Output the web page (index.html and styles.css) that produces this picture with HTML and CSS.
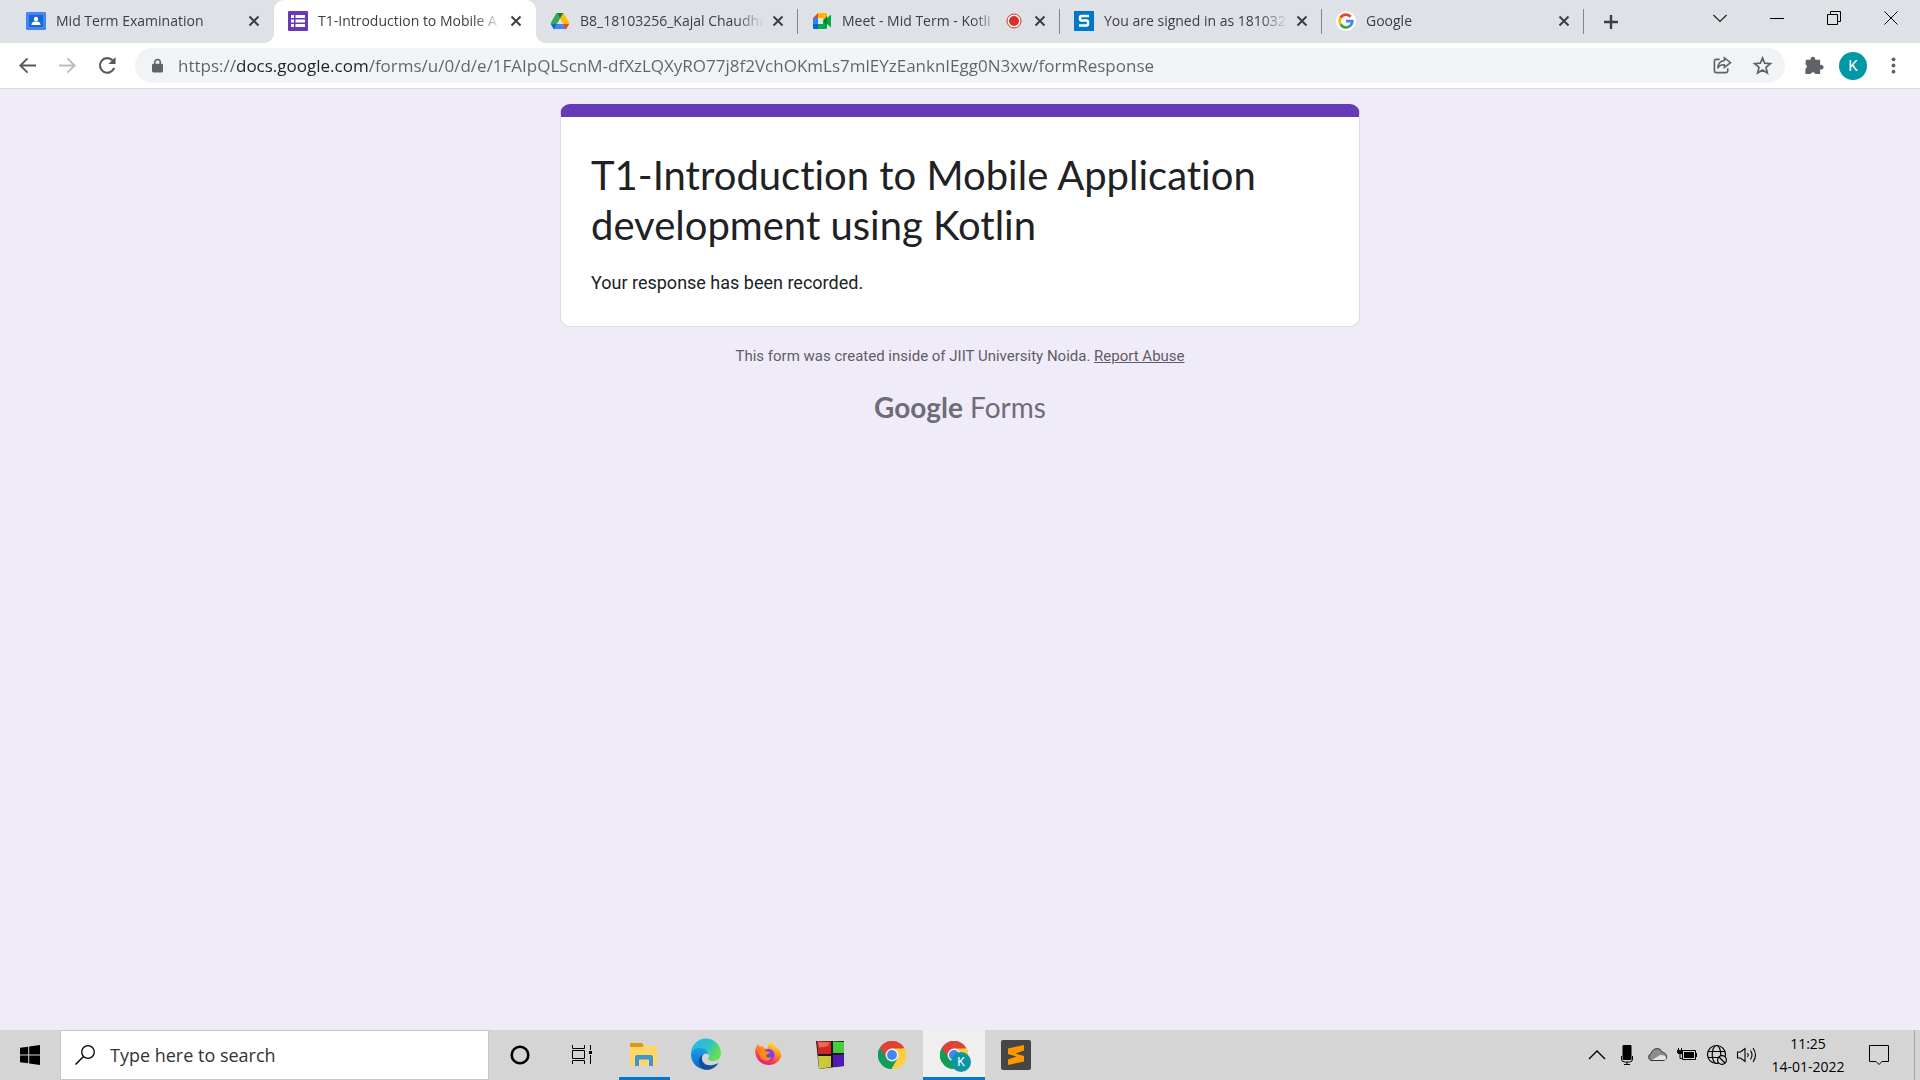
FILE: index.html
```html
<!DOCTYPE html>
<html lang="en">
<head>
<meta charset="utf-8">
<title>T1-Introduction to Mobile Application development using Kotlin</title>
<link rel="stylesheet" href="styles.css">
</head>
<body>
<svg class="defs" aria-hidden="true">
  <symbol id="x" viewBox="0 0 12 12"><path d="M1.500 1.500l9 9M10.500 1.500l-9 9" fill="none" stroke="#3c4043" stroke-width="2"/></symbol>
  <symbol id="chrome" viewBox="0 0 48 48">
    <path d="M24 24L3.200 12A24 24 0 0 1 44.800 12z" fill="#db4437"/>
    <path d="M24 24L44.800 12A24 24 0 0 1 24 48z" fill="#ffcd40"/>
    <path d="M24 24L24 48A24 24 0 0 1 3.200 12z" fill="#0f9d58"/>
    <path d="M24 13h22.300A24 24 0 0 0 44.800 12 24 24 0 0 0 3.200 12l11.300 17.500z" fill="#db4437"/>
    <path d="M33.500 29.500L23 48A24 24 0 0 0 46.300 13H24z" fill="#ffcd40"/>
    <path d="M14.500 29.500L3.200 12A24 24 0 0 0 23 48l10.500-18.500z" fill="#0f9d58"/>
    <circle cx="24" cy="24" r="11" fill="#f4f4f4"/><circle cx="24" cy="24" r="8.500" fill="#4285f4"/>
  </symbol>
</svg>

<header class="browser">
  <div class="tabstrip">
    <div class="tabs">
      <div class="tab">
        <svg class="fav" viewBox="0 0 20 20"><rect y="1" width="20" height="18" rx="1" fill="#4285f4"/><rect x="3" y="4" width="14" height="12" fill="#1967d2"/><circle cx="10" cy="8" r="2.200" fill="#fff"/><path d="M5.500 14c0-3 2-3.500 4.500-3.500s4.500.5 4.500 3.500z" fill="#fff"/></svg>
        <span class="tab-title">Mid Term Examination</span>
        <button class="close" aria-label="Close tab"><svg><use href="#x"/></svg></button>
      </div>
      <div class="tab active">
        <svg class="fav" viewBox="0 0 20 20"><rect width="20" height="20" rx="1" fill="#673ab7"/><path d="M3 4h3v3H3zM7.500 4H17v3H7.500zM3 8.500h3v3H3zM7.500 8.500H17v3H7.500zM3 13h3v3H3zM7.500 13H17v3H7.500z" fill="#fff"/></svg>
        <span class="tab-title">T1-Introduction to Mobile A</span>
        <button class="close" aria-label="Close tab"><svg><use href="#x"/></svg></button>
      </div>
      <div class="tab">
        <svg class="fav" viewBox="0 0 20 20"><path d="M6.500 2h7L10 8z" fill="#188038"/><path d="M6.500 2L10 8 4 18.500 1 13.500Q.7 12.500 1 11.500z" fill="#34a853"/><path d="M13.500 2L19 11.500 19.200 13H13L10 8z" fill="#fbbc04"/><path d="M7 13h6l3.500 5H4z" fill="#4285f4"/><path d="M.9 13H7l-3 5.500z" fill="#1967d2"/><path d="M13 13h6.200L16 18.500z" fill="#ea4335"/><path d="M10 8l3 5H7z" fill="#dee1e6"/></svg>
        <span class="tab-title">B8_18103256_Kajal Chaudha</span>
        <button class="close" aria-label="Close tab"><svg><use href="#x"/></svg></button>
      </div>
      <div class="tab">
        <svg class="fav" viewBox="0 0 20 20"><path d="M1 7l5-5v5z" fill="#ea4335"/><path d="M6 2h8q1 0 1 1v4l-4 3V7H6z" fill="#ffba00"/><path d="M1 7h5v6H1z" fill="#2684fc"/><path d="M1 13h5v5H2q-1 0-1-1z" fill="#0066da"/><path d="M6 13h5v-3l4 3v4q0 1-1 1H6z" fill="#00ac47"/><path d="M11 10l4-5v10z" fill="#00832d"/><path d="M15 7l4-3.500v13L15 13z" fill="#00ac47"/></svg>
        <span class="tab-title">Meet - Mid Term - Kotli</span>
        <svg class="rec" viewBox="0 0 16 16"><circle cx="8" cy="8" r="7" fill="#fff" stroke="#d93025"/><circle cx="8" cy="8" r="5" fill="#d93025"/></svg>
        <button class="close" aria-label="Close tab"><svg><use href="#x"/></svg></button>
      </div>
      <div class="tab">
        <svg class="fav" viewBox="0 0 20 20"><rect width="20" height="20" fill="#0078c9"/><path d="M15 5H7.500Q6 5 6 6.500v1.800Q6 9.500 7.500 9.500h5Q14 9.500 14 11v2q0 1.500-1.500 1.500H5" fill="none" stroke="#fff" stroke-width="2.500"/></svg>
        <span class="tab-title">You are signed in as 181032</span>
        <button class="close" aria-label="Close tab"><svg><use href="#x"/></svg></button>
      </div>
      <div class="tab">
        <svg class="fav" viewBox="0 0 20 20"><circle cx="10" cy="10" r="10" fill="#fff"/><g fill="none" stroke-width="2.800"><path d="M14.700 5.700A6.400 6.400 0 0 0 4.500 6.800" stroke="#ea4335"/><path d="M4.500 6.800a6.400 6.400 0 0 0 0 6.400" stroke="#fbbc05"/><path d="M4.500 13.200a6.400 6.400 0 0 0 9.800 1.500" stroke="#34a853"/><path d="M14.300 14.700Q16.400 12.700 16.300 10.200H10" stroke="#4285f4"/></g></svg>
        <span class="tab-title">Google</span>
        <button class="close" aria-label="Close tab"><svg><use href="#x"/></svg></button>
      </div>
    </div>
    <button class="newtab" aria-label="New tab"><svg viewBox="0 0 16 16"><path d="M8 1v14M1 8h14" stroke="#3c4043" stroke-width="2.400"/></svg></button>
    <div class="window-buttons">
      <button aria-label="Search tabs"><svg viewBox="0 0 14 14"><path d="M.5 4L7 10.500 13.500 4" fill="none" stroke="#222" stroke-width="1.200"/></svg></button>
      <button aria-label="Minimize"><svg viewBox="0 0 14 14"><path d="M0 7.500h14" stroke="#000"/></svg></button>
      <button aria-label="Restore"><svg viewBox="0 0 14 14"><path d="M.5 3.500h10v10H.5zM3.500 3.500v-3h10v10h-3" fill="none" stroke="#000"/></svg></button>
      <button aria-label="Close"><svg viewBox="0 0 14 14"><path d="M.5.5l13 13M13.500.5l-13 13" stroke="#000"/></svg></button>
    </div>
  </div>

  <div class="toolbar">
    <button class="nav" aria-label="Back"><svg viewBox="0 0 20 20"><path d="M19 10H3M10 2.500L2.500 10l7.500 7.500" fill="none" stroke="#55585d" stroke-width="2"/></svg></button>
    <button class="nav" aria-label="Forward"><svg viewBox="0 0 20 20"><path d="M1 10h16M10 2.500l7.500 7.500-7.500 7.500" fill="none" stroke="#babcbe" stroke-width="2"/></svg></button>
    <button class="nav" aria-label="Reload"><svg viewBox="0 0 20 20"><path d="M17 12.500A7.700 7.700 0 1 1 15.500 4.800" fill="none" stroke="#55585d" stroke-width="2.200"/><path d="M18.500 1v7.500H11z" fill="#55585d"/></svg></button>
    <div class="omnibox">
      <svg class="lock" viewBox="0 0 12 16"><rect y="5.500" width="12" height="9.500" rx="1.500" fill="#5f6368"/><path d="M3 6V4a3 3 0 0 1 6 0v2" fill="none" stroke="#5f6368" stroke-width="1.700"/></svg>
      <input class="url" type="text" aria-label="Address" value="https://docs.google.com/forms/u/0/d/e/1FAIpQLScnM-dfXzLQXyRO77j8f2VchOKmLs7mlEYzEanknIEgg0N3xw/formResponse">
      <button class="action" aria-label="Share"><svg viewBox="0 0 20 20"><path d="M7 3.500H3.500Q1.500 3.500 1.500 5.500v10q0 2 2 2h10q2 0 2-2V13" fill="none" stroke="#5f6368" stroke-width="1.700"/><path d="M12 2l6.500 5L12 12V9.300Q7 9 5 13 5.500 5.500 12 4.800z" fill="none" stroke="#5f6368" stroke-width="1.600"/></svg></button>
      <button class="action" aria-label="Bookmark"><svg viewBox="0 0 20 20"><path d="M10 2l2.300 5.600 6 .5-4.600 3.900 1.400 5.900-5.100-3.200-5.100 3.200L6.300 12 1.700 8.100l6-.5z" fill="none" stroke="#5f6368" stroke-width="1.800"/></svg></button>
    </div>
    <button class="nav" aria-label="Extensions"><svg viewBox="0 0 20 20"><path d="M2 4h5a2.500 2.500 0 1 1 4.800 0H17v5.500a2.500 2.500 0 1 1 0 4.500v5h-5a2.600 2.600 0 0 0-5 0H1.500v-5.500a2.600 2.600 0 0 0 0-4.700z" fill="#5f6368"/></svg></button>
    <button class="avatar" aria-label="Profile">K</button>
    <button class="nav" aria-label="Menu"><svg viewBox="0 0 20 20" fill="#5f6368"><circle cx="10" cy="3.500" r="2"/><circle cx="10" cy="10" r="2"/><circle cx="10" cy="16.500" r="2"/></svg></button>
  </div>
</header>

<main class="page">
  <section class="card">
    <h1>T1-Introduction to Mobile Application development using Kotlin</h1>
    <p>Your response has been recorded.</p>
  </section>
  <p class="note">This form was created inside of JIIT University Noida. <a href="#">Report Abuse</a></p>
  <a class="logo" href="#"><b>Google</b> Forms</a>
</main>

<footer class="taskbar">
  <button class="start" aria-label="Start"><svg viewBox="0 0 20 20"><path d="M0 2.800L8.200 1.700V9.500H0zM9.200 1.500L20 0v9.500H9.200zM0 10.500h8.200v7.800L0 17.200zM9.200 10.500H20V20L9.200 18.500z"/></svg></button>
  <label class="search">
    <svg viewBox="0 0 20 20"><circle cx="13" cy="7" r="6.300" fill="none" stroke="#000" stroke-width="1.300"/><path d="M8.500 11.500L.5 19.500" stroke="#000" stroke-width="1.400"/></svg>
    <input type="text" aria-label="Search" placeholder="Type here to search">
  </label>
  <div class="apps">
    <button class="app" aria-label="Cortana"><svg class="s20" viewBox="0 0 20 20"><circle cx="10" cy="10" r="8.300" fill="none" stroke="#000" stroke-width="2.600"/></svg></button>
    <button class="app" aria-label="Task View"><svg class="s20" viewBox="0 0 20 20"><path d="M.5 0v3.500h12V0M.5 19v-3.500h12V19M.5 5.500h12v8H.5zM18.500 0v5M18.500 10v9" fill="none" stroke="#000"/><path d="M17 6h3v3h-3z"/></svg></button>
    <button class="app open" aria-label="File Explorer"><svg viewBox="0 0 30 30"><path d="M1 4q0-1 1-1h11l2 3-2 1H1z" fill="#dd9a0b"/><path d="M1 7h12l2-1h13v19.500H1z" fill="#ffd667"/><path d="M6 26V17q0-2 2-2h14q2 0 2 2v9h-4v-6.500H10V26z" fill="#3f94d1"/></svg></button>
    <button class="app" aria-label="Edge"><svg viewBox="0 0 30 30">
      <defs><linearGradient id="ea" x1="0" y1="0" x2="1" y2=".5"><stop stop-color="#2bb5f0"/><stop offset=".6" stop-color="#2fc3c4"/><stop offset="1" stop-color="#67e04f"/></linearGradient><linearGradient id="eb" x1="0" y1="0" x2="0" y2="1"><stop stop-color="#1ba0e8"/><stop offset="1" stop-color="#0b63c4"/></linearGradient></defs>
      <path d="M0 14A15 15 0 0 1 30 13c0 5-3 8-8 8-4 0-6-2-4-4 2-5-3-8-8-7Q4 10 0 14z" fill="url(#ea)"/>
      <path d="M0 15C1 9 6 7 11 8.500c5 1 7 4 7 7-1-3-7-3-7 3 0 6 5 10 10 10A15 15 0 0 1 0 15z" fill="url(#eb)"/>
      <path d="M11.500 15c-3 7 4 14 16 8-4 6-9 8-15 6C6 25 7 17 11.500 15z" fill="#124f9c"/></svg></button>
    <button class="app" aria-label="Firefox"><svg viewBox="0 0 30 30">
      <defs><linearGradient id="fa" x1=".8" y1="0" x2=".3" y2="1"><stop stop-color="#fff44f"/><stop offset=".4" stop-color="#ff9a22"/><stop offset=".75" stop-color="#ff3750"/><stop offset="1" stop-color="#e31587"/></linearGradient></defs>
      <path d="M3 7l2-3 2 3 3-2v2l4 2c1-4 2-6 5-8 0 4 9 7 9.500 15A13.500 13.500 0 1 1 3 7z" fill="url(#fa)"/>
      <circle cx="15.500" cy="15" r="6" fill="#7542e5"/><path d="M4 10c4-2 6-1 8 1l5 1c0 2-4 2-4 4 1 2 4 2 6 1-2 5-10 5-12-1z" fill="#ff8a16"/></svg></button>
    <button class="app" aria-label="Code::Blocks"><svg viewBox="0 0 30 30"><path d="M1 1h28v25L4 29z" fill="#191919"/><path d="M2 1l14 .5V14H3z" fill="#cf2a22"/><path d="M18 1.500l11 .5v11H18z" fill="#46cf38"/><path d="M3 16h13v11L4 29z" fill="#cbc83c"/><path d="M18 15l11-.5-.5 11.500L18 27z" fill="#521bb9"/><path d="M3 2l12 .5-3 4-8 1z" fill="#e86a62"/></svg></button>
    <button class="app" aria-label="Chrome"><svg class="s28"><use href="#chrome"/></svg></button>
    <button class="app current" aria-label="Chrome, K"><svg class="s28"><use href="#chrome"/></svg><span class="badge">K</span></button>
    <button class="app" aria-label="Sublime Text"><svg viewBox="0 0 30 30"><rect width="30" height="30" rx="2" fill="#464646"/><path d="M23 5v5.500l-8.500 3 8.500 2.500v5.500L7 25v-5.500l8.500-3L7 14V8.500z" fill="#ff9800"/></svg></button>
  </div>
  <div class="tray">
    <button aria-label="Hidden icons"><svg viewBox="0 0 20 20"><path d="M2 14l8-8 8 8" fill="none" stroke="#000" stroke-width="1.300"/></svg></button>
    <button aria-label="Microphone"><svg viewBox="0 0 20 20"><rect x="5.500" width="9" height="15" rx="1"/><path d="M4.500 11v3q0 3 3 3h5q3 0 3-3v-3M10 17v2.500M7 19.500h6" fill="none" stroke="#000"/></svg></button>
    <button aria-label="OneDrive"><svg viewBox="0 0 20 20"><path d="M4 15.500a3.800 3.800 0 0 1 0-7C6 2.500 13 2 15 7c6 1 6 8 1 8.500z" fill="#8c8c8c" stroke="#333"/><path d="M5 15l8-5q6 0 6 3 0 2-3 2z" fill="#e5e5e5"/></svg></button>
    <button aria-label="Battery"><svg viewBox="0 0 20 20"><path d="M5.500 5.500h13v9h-13zM19.500 8v4M3 8v5.500h3M1.500 3v2M4.500 3v2" fill="none" stroke="#000"/><path d="M7 7h10v6H7zM0 5h6v3H5v1H1V8H0z"/></svg></button>
    <button aria-label="Network"><svg viewBox="0 0 20 20"><g fill="none" stroke="#000" stroke-width="1.200"><circle cx="9.500" cy="9.500" r="9"/><ellipse cx="9.500" cy="9.500" rx="4.300" ry="9"/><path d="M1 6.500h17M1 12.500h17"/></g><circle cx="15" cy="15" r="4.400" fill="#d5d5d5" stroke="#000" stroke-width="1.200"/><path d="M12 12l6 6" stroke="#000" stroke-width="1.200"/></svg></button>
    <button aria-label="Volume"><svg viewBox="0 0 20 20"><path d="M.5 7h3L8 3.500v13L3.500 13h-3zM10.500 8q1.500 2 0 4M13.500 5.500q3 4.500 0 9M16 3q5 7 0 14" fill="none" stroke="#000" stroke-width="1.100"/></svg></button>
  </div>
  <time class="clock"><span>11:25</span><span>14-01-2022</span></time>
  <button class="notify" aria-label="Notifications"><svg viewBox="0 0 20 20"><path d="M.5.5h19v16H13L10 19.500 7 16.500H.5z" fill="none" stroke="#000"/></svg></button>
  <button class="desktop" aria-label="Show desktop"></button>
</footer>
</body>
</html>
```
FILE: styles.css
```css
* { box-sizing: border-box; }
body {
  margin: 0;
  min-height: 100vh;
  display: flex;
  flex-direction: column;
  font-family: "Open Sans", "Noto Sans", sans-serif;
  background: #f0ebf8;
  color: #202124;
}
button { border: 0; padding: 0; background: none; font: inherit; color: inherit; display: flex; align-items: center; justify-content: center; flex: none; }
input { border: 0; padding: 0; background: none; font: inherit; outline: 0; min-width: 0; }
svg { display: block; flex: none; overflow: visible; }
.defs { width: 0; height: 0; position: absolute; }

/* Tab strip */
.tabstrip { display: flex; height: 43px; background: #dee1e6; padding-left: 12px; }
.tabs { display: flex; flex: 0 1 1572px; min-width: 0; }
.tab { flex: 1 1 0; min-width: 0; display: flex; align-items: center; padding: 0 12px 2px 14px; position: relative; font-size: 14px; color: #3c4043; }
.tab + .tab:not(.active)::after, .tab:last-child::after { content: ""; position: absolute; right: 0; top: 9px; height: 25px; width: 1px; background: #80868b; }
.tab.active { background: #fff; border-radius: 10px 10px 0 0; }
.tab.active::before, .tab.active::after { content: ""; position: absolute; bottom: 0; width: 10px; height: 10px; }
.tab.active::before { right: 100%; background: radial-gradient(circle at 0 0, transparent 10px, #fff 10px); }
.tab.active::after { left: 100%; background: radial-gradient(circle at 100% 0, transparent 10px, #fff 10px); }
.fav { width: 20px; height: 20px; margin-right: 10px; }
.tab-title { flex: 1; min-width: 0; overflow: hidden; white-space: nowrap; line-height: 24px; mask-image: linear-gradient(to right, #000 calc(100% - 28px), transparent); }
.rec { width: 16px; height: 16px; margin: 0 4px 0 6px; }
.close { width: 16px; height: 24px; margin-left: 6px; }
.close svg { width: 12px; height: 12px; }
.newtab { width: 54px; }
.newtab svg { width: 16px; height: 16px; }
.window-buttons { display: flex; margin-left: auto; padding-right: 1px; height: 36px; }
.window-buttons button { width: 57px; }
.window-buttons svg { width: 14px; height: 14px; }

/* Toolbar */
.toolbar { display: flex; align-items: center; height: 46px; padding: 0 7px; background: #fff; border-bottom: 1px solid #d9dade; }
.nav { width: 40px; height: 36px; }
.nav svg { width: 19px; height: 19px; }
.omnibox { display: flex; align-items: center; flex: 1; min-width: 0; height: 35px; margin: 0 8px; padding: 0 3px 0 17px; border-radius: 18px; background: #f1f3f4; }
.lock { width: 11px; height: 16px; margin-right: 15px; }
.url {
  flex: 1;
  font-size: 17px;
  line-height: 24px;
  color: #5f6368;
  background: linear-gradient(to right, #5f6368 57px, #202124 57px 190px, #5f6368 190px);
  -webkit-background-clip: text;
  background-clip: text;
  -webkit-text-fill-color: transparent;
}
.action { width: 40px; height: 34px; }
.action svg { width: 19px; height: 19px; }
.avatar { width: 28px; height: 28px; margin: 0 6px; border-radius: 50%; background: #0097a7; color: #fff; font-family: Roboto, sans-serif; font-size: 15px; }

/* Form page */
.page { flex: 1; display: flex; flex-direction: column; align-items: center; padding: 15px 16px 0; font-family: Roboto, sans-serif; }
.card { width: 100%; max-width: 800px; padding: 33px 30px 31px; background: #fff; border: 1px solid #dadce0; border-top: 13px solid #673ab7; border-radius: 10px; }
.card h1 { margin: 0 0 20px; font-family: Lato, sans-serif; font-size: 40px; font-weight: 400; line-height: 50px; font-variant-ligatures: none; }
.card p { margin: 0; font-size: 18px; line-height: 25px; }
.note { margin: 17px 0 0; font-size: 15px; line-height: 24px; color: #5f5c65; }
.note a { color: inherit; }
.logo { margin-top: 21px; font-family: Lato, sans-serif; font-size: 28px; line-height: 36px; color: #6f6c76; text-decoration: none; }

/* Taskbar */
.taskbar { display: flex; height: 50px; background: #d5d5d5; color: #000; }
.start { width: 60px; }
.start svg { width: 20px; height: 20px; }
.search { flex: 0 1 429px; display: flex; align-items: center; padding: 0 14px; background: #fff; border: 1px solid #c8c8c8; }
.search svg { width: 20px; height: 20px; margin-right: 15px; }
.search input { flex: 1; font-size: 18px; }
.search input::placeholder { color: #333; opacity: 1; }
.apps { display: flex; }
.app { width: 62px; position: relative; }
.app svg { width: 30px; height: 30px; }
.app .s20 { width: 20px; height: 20px; }
.app .s28 { width: 28px; height: 28px; }
.open::after, .current::after { content: ""; position: absolute; bottom: 0; left: 6px; right: 5px; height: 3px; background: #0078d7; }
.current { background: #efefef; }
.current::after { left: 0; right: 0; }
.badge { position: absolute; left: 28px; top: 22px; width: 20px; height: 20px; border-radius: 50%; background: #0e94a3; color: #fff; font: 12px/20px Roboto, sans-serif; }
.tray { display: flex; margin-left: auto; }
.tray button { width: 30px; }
.tray svg { width: 20px; height: 20px; }
.clock { display: flex; flex-direction: column; align-items: center; width: 92px; padding-top: 2px; font-size: 14px; line-height: 23px; }
.notify { width: 50px; }
.notify svg { width: 20px; height: 20px; }
.desktop { width: 6px; margin-left: 10px; border-left: 1px solid #a5a5a5; }
```
